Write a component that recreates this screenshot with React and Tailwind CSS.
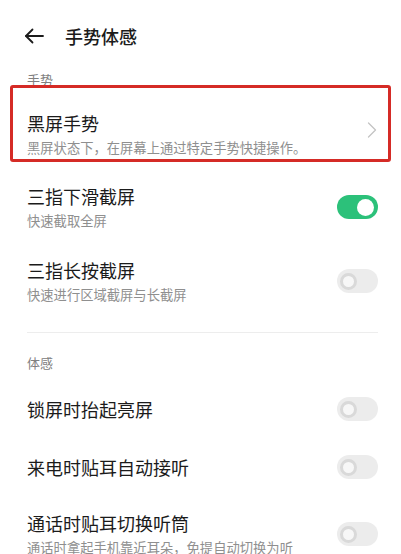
import React from 'react';

const Toggle = ({ on }) => (
  <div
    className={`relative h-[24px] w-[41px] shrink-0 rounded-full ${on ? 'bg-[#2cc17a]' : 'bg-[#ececec]'}`}
  >
    {on ? (
      <span className="absolute right-[4px] top-[3.5px] h-[17px] w-[17px] rounded-full bg-white" />
    ) : (
      <span className="absolute left-[3px] top-[3.5px] h-[17px] w-[17px] rounded-full border-[3px] border-[#d9d9d9] bg-[#f7f7f7]" />
    )}
  </div>
);

const SettingRow = ({ title, desc, on, className = '' }) => (
  <div className={`flex items-center justify-between pl-[27px] pr-[23px] ${className}`}>
    <div className="flex flex-col">
      <span className="text-[18px] leading-[24px] text-[#1b1b1b]">{title}</span>
      {desc && <span className="mt-[4px] text-[13.3px] leading-[18px] text-[#8f8f8f]">{desc}</span>}
    </div>
    <Toggle on={on} />
  </div>
);

const App = () => {
  return (
    <div
      className="h-[554px] w-[401px] overflow-hidden bg-white"
      style={{ fontFamily: '"Noto Sans CJK SC", "Noto Sans", sans-serif' }}
    >
      {/* 顶部标题栏 */}
      <div className="flex h-[72px] items-center pl-[24px]">
        <svg width="20" height="16" viewBox="0 0 20 16" fill="none" stroke="#1b1b1b" strokeWidth="1.8" strokeLinecap="round" strokeLinejoin="round">
          <path d="M19 8H2" />
          <path d="M8.5 1.5L2 8l6.5 6.5" />
        </svg>
        <span className="ml-[21px] text-[18px] font-medium leading-[24px] text-[#1b1b1b]">手势体感</span>
      </div>

      <div className="h-[16px] pl-[27px] text-[13px] leading-[16px] text-[#808080]">手势</div>

      {/* 黑屏手势 */}
      <div className="relative flex items-center justify-between pb-[3px] pl-[27px] pr-[24px] pt-[23px]">
        <div className="flex flex-col">
          <span className="text-[18px] leading-[24px] text-[#1b1b1b]">黑屏手势</span>
          <span className="mt-[4px] text-[13.3px] leading-[18px] text-[#8f8f8f]">
            黑屏状态下，在屏幕上通过特定手势快捷操作。
          </span>
        </div>
        <svg width="10" height="16" viewBox="0 0 10 16" fill="none" stroke="#c4c4c4" strokeWidth="1.3" strokeLinecap="round" strokeLinejoin="round" className="mb-[8px]">
          <path d="M1.5 1l7 7-7 7" />
        </svg>
        <div className="pointer-events-none absolute -top-[3px] bottom-[-2px] left-[10px] right-[10px] rounded-[3px] border-[3px] border-[#d52b26]" />
      </div>

      <SettingRow title="三指下滑截屏" desc="快速截取全屏" on className="pb-[14px] pt-[24px]" />
      <SettingRow title="三指长按截屏" desc="快速进行区域截屏与长截屏" on={false} className="pb-[28px] pt-[14px]" />

      <div className="ml-[27px] mr-[23px] h-px bg-[#ededed]" />

      <div className="mt-[22px] h-[16px] pl-[27px] text-[13px] leading-[16px] text-[#808080]">体感</div>

      <div className="mt-[9px]">
        <SettingRow title="锁屏时抬起亮屏" on={false} className="h-[58px]" />
        <SettingRow title="来电时贴耳自动接听" on={false} className="h-[58px]" />
        <SettingRow
          title="通话时贴耳切换听筒"
          desc="通话时拿起手机靠近耳朵，免提自动切换为听"
          on={false}
          className="pt-[15px]"
        />
      </div>
    </div>
  );
};

export default App;
